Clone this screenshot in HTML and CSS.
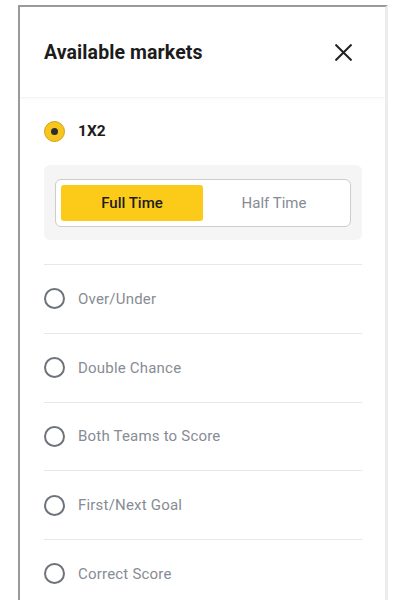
FILE: index.html
```html
<!DOCTYPE html>
<html>
<head>
<meta charset="utf-8">
<link rel="stylesheet" href="styles.css">
</head>
<body>
<div class="sheet">
  <div class="header">
    <h1 class="title">Available markets</h1>
    <svg class="close" width="17" height="17" viewBox="0 0 17 17"><path d="M1.2 1.2L15.8 15.8M15.8 1.2L1.2 15.8" stroke="#222" stroke-width="2" stroke-linecap="square"/></svg>
  </div>
  <div class="content">
    <div class="selected-row">
      <span class="radio radio-on"><span class="dot"></span></span>
      <span class="selected-label">1X2</span>
    </div>
    <div class="period-box">
      <div class="segmented">
        <div class="seg seg-active">Full Time</div>
        <div class="seg">Half Time</div>
      </div>
    </div>
    <ul class="market-list">
      <li class="market"><span class="radio"></span><span class="market-label">Over/Under</span></li>
      <li class="market"><span class="radio"></span><span class="market-label">Double Chance</span></li>
      <li class="market"><span class="radio"></span><span class="market-label">Both Teams to Score</span></li>
      <li class="market"><span class="radio"></span><span class="market-label">First/Next Goal</span></li>
      <li class="market"><span class="radio"></span><span class="market-label">Correct Score</span></li>
    </ul>
  </div>
</div>
</body>
</html>
```
FILE: styles.css
```css
html, body {
  margin: 0;
  padding: 0;
  background: #fff;
  height: 100%;
  overflow: hidden;
}
body {
  font-family: Roboto, "Liberation Sans", sans-serif;
}
.sheet {
  margin: 5px 0 0 18px;
  width: 370px;
  height: calc(100vh - 5px);
  box-sizing: border-box;
  overflow: hidden;
  border-top: 2px solid #9a9a9a;
  border-left: 2px solid #9a9a9a;
  border-right: 3px solid #ececec;
  background: #fff;
}
.header {
  height: 90px;
  display: flex;
  align-items: center;
  justify-content: space-between;
  padding: 0 33px 0 24px;
  border-bottom: 1px solid #f4f4f4;
  box-shadow: 0 2px 3px rgba(0,0,0,0.02);
}
.title {
  margin: 0;
  font-size: 19.5px;
  font-weight: 700;
  color: #1c1c1c;
  letter-spacing: 0.1px;
}
.close {
  display: block;
}
.content {
  padding: 0 23px 0 24px;
}
.selected-row {
  margin-top: 23px;
  height: 20px;
  display: flex;
  align-items: center;
  gap: 13px;
}
.radio {
  box-sizing: border-box;
  width: 21px;
  height: 21px;
  border-radius: 50%;
  border: 2px solid #6e737b;
  flex: none;
  display: flex;
  align-items: center;
  justify-content: center;
}
.radio-on {
  background: #f8c51c;
  border: 1.5px solid #cfa11a;
}
.dot {
  width: 7px;
  height: 7px;
  border-radius: 50%;
  background: #2e2e32;
}
.selected-label {
  font-size: 15.5px;
  font-weight: 700;
  color: #1c1c1c;
}
.period-box {
  margin-top: 24px;
  background: #f5f5f5;
  border-radius: 6px;
  padding: 14px 11px 13px;
}
.segmented {
  display: flex;
  background: #fff;
  border: 1px solid #cdcdcd;
  border-radius: 6px;
  padding: 5px;
}
.seg {
  flex: 1;
  height: 36px;
  display: flex;
  align-items: center;
  justify-content: center;
  font-size: 15px;
  color: #868b93;
  border-radius: 3px;
}
.seg-active {
  background: #fccb1a;
  color: #1c1c1c;
  font-weight: 500;
}
.market-list {
  list-style: none;
  margin: 24px 0 0;
  padding: 0;
}
.market {
  border-top: 1px solid #e8e8e8;
  height: 67.75px;
  display: flex;
  align-items: center;
  gap: 13px;
}
.market-label {
  font-size: 15px;
  color: #878c94;
  letter-spacing: 0.2px;
}
```
